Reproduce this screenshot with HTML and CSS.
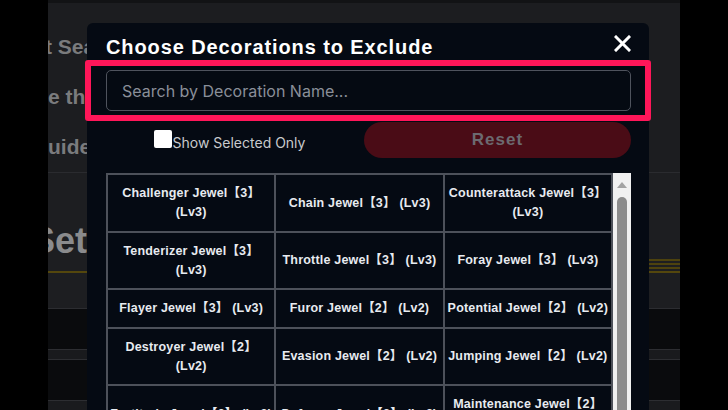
FILE: index.html
```html
<!DOCTYPE html>
<html lang="en">
<head>
<meta charset="utf-8">
<title>Choose Decorations to Exclude</title>
<link rel="stylesheet" href="styles.css">
</head>
<body>
<div class="page">
  <div class="topbar"></div>
  <ul class="nav">
    <li class="nav-item">t Sea</li>
    <li class="nav-item">e th</li>
    <li class="nav-item">uide</li>
  </ul>
  <div class="hero">
    <div class="hero-row">
      <h2 class="hero-title">Set</h2>
      <div class="stripes"></div>
    </div>
    <div class="gold-bar"></div>
  </div>
  <div class="strip dark"></div>
  <div class="strip band"></div>
  <div class="strip dark"></div>
  <div class="strip rest"></div>
</div>

<div class="modal">
  <div class="modal-head">
    <h1 class="modal-title">Choose Decorations to Exclude</h1>
    <button class="close" aria-label="Close">
      <svg width="17" height="17" viewBox="0 0 17 17"><path d="M2 2 L15 15 M15 2 L2 15" stroke="#ffffff" stroke-width="3" stroke-linecap="square" fill="none"/></svg>
    </button>
  </div>
  <input class="search" type="text" placeholder="Search by Decoration Name...">
  <div class="controls">
    <label class="show-selected"><input class="check" type="checkbox"><span class="label-text">Show Selected Only</span></label>
    <button class="reset">Reset</button>
  </div>
  <div class="list-wrap">
    <div class="grid">
      <div class="cell">Challenger Jewel【3】<br>(Lv3)</div>
      <div class="cell">Chain Jewel【3】 (Lv3)</div>
      <div class="cell">Counterattack Jewel【3】<br>(Lv3)</div>
      <div class="cell">Tenderizer Jewel【3】<br>(Lv3)</div>
      <div class="cell">Throttle Jewel【3】 (Lv3)</div>
      <div class="cell">Foray Jewel【3】 (Lv3)</div>
      <div class="cell">Flayer Jewel【3】 (Lv3)</div>
      <div class="cell">Furor Jewel【2】 (Lv2)</div>
      <div class="cell">Potential Jewel【2】 (Lv2)</div>
      <div class="cell">Destroyer Jewel【2】<br>(Lv2)</div>
      <div class="cell">Evasion Jewel【2】 (Lv2)</div>
      <div class="cell">Jumping Jewel【2】 (Lv2)</div>
      <div class="cell">Fortitude Jewel【2】 (Lv2)</div>
      <div class="cell">Defense Jewel【2】 (Lv2)</div>
      <div class="cell">Maintenance Jewel【2】<br>(Lv2)</div>
    </div>
    <div class="scrollbar">
      <div class="arrow-up"></div>
      <div class="thumb"></div>
    </div>
  </div>
</div>

<div class="highlight"></div>
</body>
</html>
```

FILE: styles.css
```css
html, body {
  margin: 0;
  padding: 0;
}
body {
  position: relative;
  width: 728px;
  height: 410px;
  overflow: hidden;
  background: #000000;
  font-family: "Liberation Sans", "Noto Sans CJK JP", sans-serif;
}

/* dimmed page behind the dialog */
.page {
  width: 632px;
  height: 410px;
  margin-left: 48px;
  background: #1c1d20;
  overflow: hidden;
}
.topbar {
  height: 3px;
  background: #121315;
}
.nav {
  list-style: none;
  margin: 0;
  padding: 19px 0 0 0;
  border-bottom: 1px solid #2a2b2f;
}
.nav-item {
  width: 39px;
  height: 50px;
  overflow: hidden;
  line-height: 50px;
  font-size: 21px;
  font-weight: bold;
  color: #7a7b7d;
  white-space: nowrap;
}
.nav-item:first-child {
  text-indent: -3px;
}
.hero {
  height: 136px;
  padding-top: 48px;
  box-sizing: border-box;
  background: #1d1e21;
  border-bottom: 1px solid #2c2d31;
}
.hero-row {
  display: flex;
  justify-content: space-between;
  align-items: flex-end;
}
.hero-title {
  margin: 0 0 10px -17px;
  font-size: 36px;
  line-height: 40px;
  font-weight: bold;
  color: #8a8b8d;
}
.stripes {
  width: 31px;
  height: 12px;
  background: repeating-linear-gradient(to bottom, #4d420e 0 2px, transparent 2px 4px);
}
.gold-bar {
  height: 2px;
  background: #54470d;
}
.strip {
  border-bottom: 1px solid #2d2e32;
}
.strip.dark {
  height: 40px;
  background: #0a0b0d;
}
.strip.band {
  height: 9px;
  background: #191a1d;
}
.strip.rest {
  height: 40px;
  background: #1a1b1e;
  border-bottom: 0;
}

/* dialog */
.modal {
  position: absolute;
  left: 87px;
  top: 23px;
  width: 562px;
  height: 420px;
  box-sizing: border-box;
  padding: 12px 18px 0 19px;
  background: #050a13;
  border-radius: 6px;
}
.modal-head {
  display: flex;
  justify-content: space-between;
  align-items: flex-start;
  height: 24px;
}
.modal-title {
  margin: 0;
  font-size: 20px;
  line-height: 24px;
  font-weight: bold;
  letter-spacing: 0.9px;
  color: #ffffff;
}
.close {
  margin: 0;
  padding: 0;
  border: 0;
  background: transparent;
  width: 17px;
  height: 17px;
  display: block;
}
.close svg {
  display: block;
}
.search {
  display: block;
  box-sizing: border-box;
  width: 525px;
  height: 41px;
  margin: 11px 0 0 0;
  padding: 0 15px;
  border: 1.5px solid #4f535d;
  border-radius: 5px;
  background: #050a12;
  color: #ffffff;
  font-family: Inter, "Noto Sans", sans-serif;
  font-size: 16px;
  outline: none;
}
.search::placeholder {
  color: #8a8f99;
}
.controls {
  display: grid;
  grid-template-columns: 247px 267px;
  column-gap: 11px;
  margin-top: 11px;
  height: 36px;
}
.show-selected {
  display: flex;
  align-items: flex-start;
  justify-content: center;
  padding-top: 8px;
  font-family: Inter, "Noto Sans", sans-serif;
  font-size: 14px;
  color: #c9cacd;
  line-height: 18px;
}
.label-text {
  margin-top: 4px;
}
.check {
  appearance: none;
  -webkit-appearance: none;
  width: 18px;
  height: 18px;
  margin: 0 1px 0 0;
  background: #ffffff;
  border-radius: 2px;
  border: 0;
}
.reset {
  height: 36px;
  border: 0;
  border-radius: 18px;
  background: #4a0c16;
  color: #6c6a70;
  font-family: "Liberation Sans", sans-serif;
  font-size: 17px;
  font-weight: bold;
  letter-spacing: 1px;
  padding: 0;
}

.list-wrap {
  display: flex;
  margin-top: 15px;
}
.grid {
  width: 507px;
  box-sizing: border-box;
  display: grid;
  grid-template-columns: repeat(3, 1fr);
  border-top: 2px solid #4d515a;
  border-left: 2px solid #4d515a;
}
.cell {
  display: flex;
  align-items: center;
  justify-content: center;
  text-align: center;
  padding: 9px 2px 8.5px;
  border-right: 2px solid #4d515a;
  border-bottom: 2px solid #4d515a;
  font-size: 12.5px;
  line-height: 19px;
  font-weight: bold;
  letter-spacing: 0.2px;
  color: #e8ebf0;
  white-space: nowrap;
}
.scrollbar {
  width: 18px;
  height: 260px;
  background: #f1f1f1;
  display: flex;
  flex-direction: column;
  align-items: center;
}
.arrow-up {
  width: 0;
  height: 0;
  margin-top: 9px;
  border-left: 5px solid transparent;
  border-right: 5px solid transparent;
  border-bottom: 6px solid #a3a3a3;
}
.thumb {
  width: 10px;
  flex: 1;
  margin-top: 9px;
  background: #8c8c8c;
  border-radius: 5px 5px 0 0;
}

/* annotation frame over the search box */
.highlight {
  position: absolute;
  left: 85px;
  top: 60px;
  width: 566px;
  height: 61px;
  box-sizing: border-box;
  border: 6.5px solid #ff1659;
  border-radius: 3px;
}
```
